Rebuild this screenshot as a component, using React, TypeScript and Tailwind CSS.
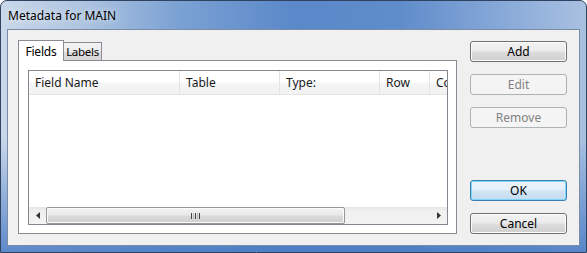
import React from "react"

const font = "font-['Segoe_UI','Noto_Sans',sans-serif]"

type Col = { label: string; width: string }

const columns: Col[] = [
  { label: "Field Name", width: "w-[151px]" },
  { label: "Table", width: "w-[100px]" },
  { label: "Type:", width: "w-[100px]" },
  { label: "Row", width: "w-[50px]" },
  { label: "Co", width: "w-[30px]" },
]

function Button({
  children,
  variant = "normal",
  className = "",
}: {
  children: React.ReactNode
  variant?: "normal" | "disabled" | "default"
  className?: string
}) {
  const styles = {
    normal:
      "border-[#707070] text-black bg-[linear-gradient(180deg,#f2f2f2_0%,#ebebeb_48%,#dddddd_52%,#cfcfcf_100%)] shadow-[inset_0_0_0_1px_#fcfcfc]",
    disabled: "border-[#adb2b5] text-[#838383] bg-[#f4f4f4]",
    default:
      "border-[#3c7fb1] text-black bg-[linear-gradient(180deg,#eef5fa_0%,#e2eef8_48%,#d2e4f3_52%,#c4dbef_100%)] shadow-[inset_0_0_0_1px_#7fd6fb]",
  }[variant]

  return (
    <div
      className={`flex h-[21px] w-[97px] items-center justify-center rounded-[3px] border text-[12px] leading-none ${styles} ${className}`}
    >
      {children}
    </div>
  )
}

function ScrollArrow({ dir }: { dir: "left" | "right" }) {
  return (
    <div className="flex h-full w-[17px] items-center justify-center">
      <svg width="4" height="7" viewBox="0 0 4 7">
        {dir === "left" ? (
          <polygon points="4,0 4,7 0,3.5" fill="#333" />
        ) : (
          <polygon points="0,0 0,7 4,3.5" fill="#333" />
        )}
      </svg>
    </div>
  )
}

export default function App() {
  return (
    <div
      className={`${font} relative flex h-[253px] w-[587px] flex-col overflow-hidden rounded-t-[7px] border border-[#2f4260] bg-[linear-gradient(180deg,rgba(255,255,255,0)_55%,rgba(74,124,196,0.85)_100%),linear-gradient(90deg,#c9d8ea_0%,#aec4e0_14%,#7ca2d4_30%,#5a88c9_50%,#5f8cca_68%,#86a8d8_85%,#a9c1e1_100%)]`}
    >
      {/* Title bar */}
      <div className="flex h-[28px] shrink-0 items-center pl-[7px] pt-[2px] text-[12px] text-black [text-shadow:0_0_6px_rgba(255,255,255,0.9)]">
        Metadata for MAIN
      </div>

      {/* Client area */}
      <div className="mx-[6px] mb-[6px] flex flex-1 border border-[#7b8da6] bg-[#f0f0f0] pl-[10px] pt-[10px]">
        {/* Tab control */}
        <div className="flex w-[439px] flex-col">
          <div className="flex h-[20px] items-end">
            <div className="relative z-10 -mb-px flex h-[21px] w-[46px] items-start justify-center border border-b-0 border-[#898c95] bg-white pt-[2px] text-[12px] tracking-[-0.2px] text-black">
              Fields
            </div>
            <div className="-ml-px flex h-[18px] w-[39px] items-center justify-center whitespace-nowrap border border-b-0 border-[#898c95] bg-[linear-gradient(180deg,#f3f3f3_0%,#ebebeb_50%,#dddddd_51%,#d7d7d7_100%)] text-[11.5px] tracking-[-0.3px] text-black">
              Labels
            </div>
          </div>

          <div className="h-[174px] border border-[#898c95] bg-white pb-[8px] pl-[9px] pr-[8px] pt-[9px]">
            {/* List view */}
            <div className="flex h-full flex-col border border-[#828790] bg-white">
              <div className="flex h-[24px] shrink-0 overflow-hidden border-b border-[#e5e5e5] bg-[linear-gradient(180deg,#ffffff_0%,#ffffff_45%,#f4f5f7_55%,#f2f2f2_100%)]">
                {columns.map((c) => (
                  <div
                    key={c.label}
                    className={`${c.width} flex shrink-0 items-center whitespace-nowrap border-r border-[#e5e5e5] pl-[6px] text-[12px] text-[#1a1a1a]`}
                  >
                    {c.label}
                  </div>
                ))}
              </div>

              <div className="flex-1" />

              {/* Horizontal scrollbar */}
              <div className="flex h-[17px] shrink-0 items-stretch bg-[linear-gradient(180deg,#e6e6e6_0%,#f0f0f0_25%,#f3f3f3_100%)]">
                <ScrollArrow dir="left" />
                <div className="flex w-[299px] items-center justify-center rounded-[2px] border border-[#979797] bg-[linear-gradient(180deg,#f4f4f4_0%,#e8e8e8_48%,#dadada_52%,#d0d0d0_100%)] shadow-[inset_0_0_0_1px_#fafafa]">
                  <div className="flex gap-[1px]">
                    <div className="h-[6px] w-[1px] bg-[#444]" />
                    <div className="h-[6px] w-[1px] bg-[#bbb]" />
                    <div className="h-[6px] w-[1px] bg-[#444]" />
                    <div className="h-[6px] w-[1px] bg-[#bbb]" />
                    <div className="h-[6px] w-[1px] bg-[#444]" />
                  </div>
                </div>
                <div className="flex-1" />
                <ScrollArrow dir="right" />
              </div>
            </div>
          </div>
        </div>

        {/* Buttons */}
        <div className="ml-[13px] flex flex-col pt-[1px]">
          <Button>Add</Button>
          <Button variant="disabled" className="mt-[12px]">
            Edit
          </Button>
          <Button variant="disabled" className="mt-[12px]">
            Remove
          </Button>
          <Button variant="default" className="mt-[52px]">
            OK
          </Button>
          <Button className="mt-[12px]">Cancel</Button>
        </div>
      </div>
    </div>
  )
}
